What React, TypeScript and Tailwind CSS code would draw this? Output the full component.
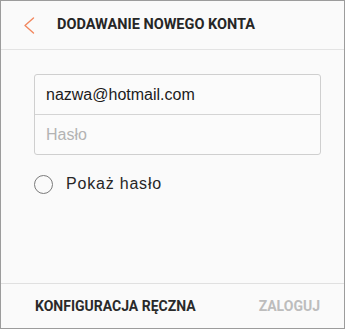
export default function App() {
  return (
    <div className="w-[345px] h-[329px] box-border border border-[#9c9c9c] bg-[#fafafa] flex flex-col font-['Liberation_Sans',Arial,sans-serif]">
      <header className="h-[49px] shrink-0 border-b border-[#e3e3e3] flex items-center">
        <svg width="12" height="17" viewBox="0 0 12 17" className="ml-[22px]" fill="none">
          <path d="M10.5 1 L2 8.5 L10.5 16" stroke="#f2875e" strokeWidth="1.4" strokeLinecap="round" strokeLinejoin="round" />
        </svg>
        <h1 className="ml-[22px] text-[14.5px] font-bold text-[#262626] font-['Roboto',sans-serif]">
          DODAWANIE NOWEGO KONTA
        </h1>
      </header>

      <main className="flex-1 pl-[33px] pr-[23px] pt-[24px]">
        <div className="border border-[#cfcfcf] rounded-[3px] bg-[#fbfbfb]">
          <div className="h-[40px] flex items-center pl-[11px] border-b border-[#d4d4d4] text-[16px] text-[#1c1c1c]">
            nazwa@hotmail.com
          </div>
          <div className="h-[39px] flex items-center pl-[11px] text-[16px] text-[#b3b3b3]">
            Hasło
          </div>
        </div>

        <label className="mt-[17px] flex items-center">
          <span className="w-[19px] h-[19px] rounded-full border-[1.5px] border-[#7a7a7a] box-border" />
          <span className="ml-[13px] text-[16px] text-[#262626] tracking-[0.8px]">Pokaż hasło</span>
        </label>
      </main>

      <footer className="h-[45px] shrink-0 border-t border-[#e0e0e0] flex items-center justify-between pl-[34px] pr-[24px] font-['Roboto',sans-serif] font-bold text-[14px]">
        <span className="text-[#2a2a2a]">KONFIGURACJA RĘCZNA</span>
        <span className="text-[#bdbdbd]">ZALOGUJ</span>
      </footer>
    </div>
  );
}
